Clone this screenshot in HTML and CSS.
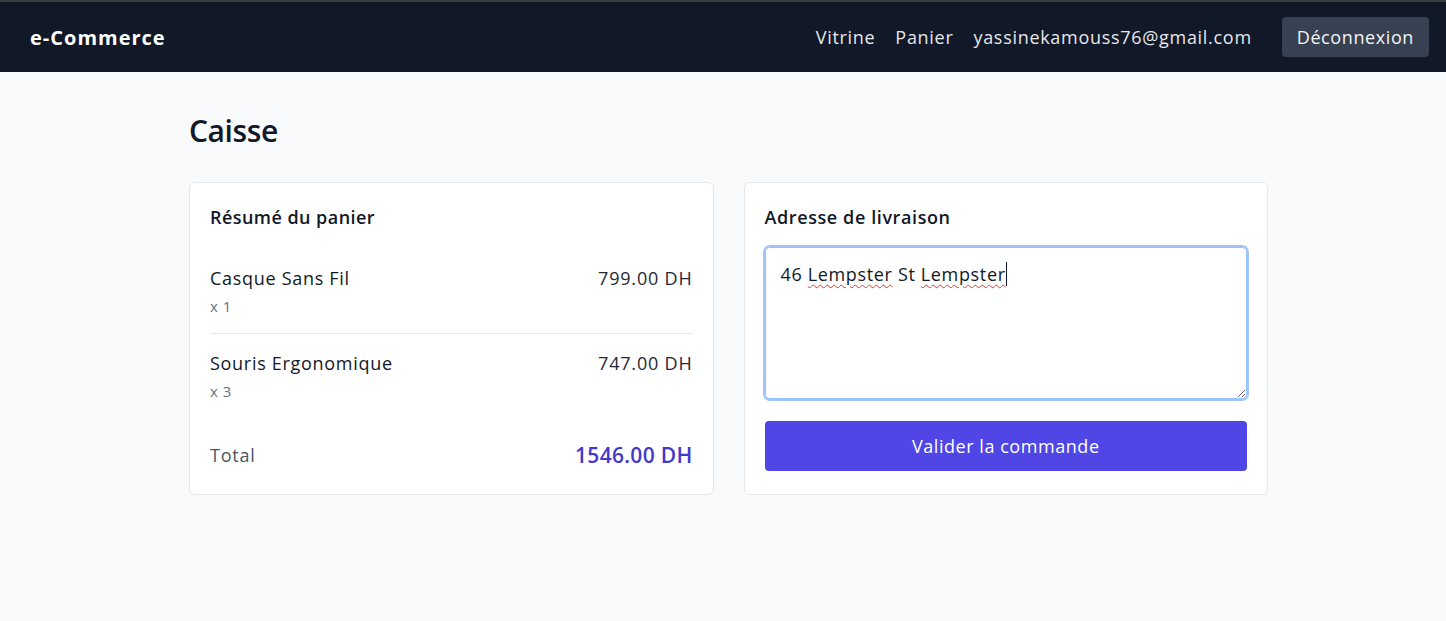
FILE: index.html
```html
<!DOCTYPE html>
<html lang="fr">
<head>
<meta charset="utf-8">
<title>Caisse - e-Commerce</title>
<link rel="stylesheet" href="styles.css">
</head>
<body>
<header class="navbar">
  <a class="brand" href="#">e-Commerce</a>
  <nav class="nav-links">
    <a href="#">Vitrine</a>
    <a href="#">Panier</a>
    <span class="user">yassinekamouss76@gmail.com</span>
    <button class="logout" type="button">Déconnexion</button>
  </nav>
</header>
<main class="container">
  <h1 class="page-title">Caisse</h1>
  <div class="grid">
    <section class="card">
      <h2 class="card-title">Résumé du panier</h2>
      <ul class="items">
        <li class="item">
          <div class="item-info">
            <div class="item-name">Casque Sans Fil</div>
            <div class="item-qty">x 1</div>
          </div>
          <div class="item-price">799.00 DH</div>
        </li>
        <li class="item">
          <div class="item-info">
            <div class="item-name">Souris Ergonomique</div>
            <div class="item-qty">x 3</div>
          </div>
          <div class="item-price">747.00 DH</div>
        </li>
      </ul>
      <div class="total">
        <span class="total-label">Total</span>
        <span class="total-value">1546.00 DH</span>
      </div>
    </section>
    <section class="card">
      <h2 class="card-title wide">Adresse de livraison</h2>
      <div class="address" role="textbox" aria-multiline="true">46 <span class="typo">Lempster</span> St <span class="typo caret">Lempster</span></div>
      <button class="submit" type="button">Valider la commande</button>
    </section>
  </div>
</main>
</body>
</html>
```
FILE: styles.css
```css
* { box-sizing: border-box; }
html, body { margin: 0; padding: 0; }
body {
  font-family: "Open Sans", "Noto Sans", sans-serif;
  background: #f9fafb;
  color: #111827;
  min-height: 621px;
  letter-spacing: 0.7px;
}
.navbar {
  height: 72px;
  border-top: 2px solid #3c3d40;
  background: #111827;
  display: flex;
  align-items: center;
  justify-content: space-between;
  padding: 0 17px 0 30px;
}
.brand {
  color: #fff;
  font-size: 20px;
  font-weight: 700;
  text-decoration: none;
  letter-spacing: 1px;
}
.nav-links {
  display: flex;
  align-items: center;
  gap: 20px;
  font-size: 18px;
  color: #e5e7eb;
}
.nav-links a { color: #e5e7eb; text-decoration: none; }
.logout {
  margin-left: 10px;
  font: inherit;
  letter-spacing: 0.6px;
  color: #f3f4f6;
  background: #374151;
  border: 0;
  border-radius: 4px;
  height: 40px;
  padding: 0 15px;
}
.container {
  max-width: 1079px;
  margin: 0 auto;
  padding: 41px 0 40px;
  position: relative;
  left: 5.5px;
}
.page-title {
  margin: 0 0 33px;
  font-size: 30px;
  line-height: 36px;
  font-weight: 600;
  letter-spacing: -0.4px;
  color: #111827;
}
.grid {
  display: grid;
  grid-template-columns: 1fr 1fr;
  gap: 30px;
  align-items: stretch;
}
.card {
  background: #fff;
  border: 1px solid #e5e7eb;
  border-radius: 6px;
  padding: 20px 20px 23px;
}
.card-title {
  margin: 0 0 16px;
  font-size: 18px;
  line-height: 28px;
  font-weight: 600;
  letter-spacing: 0.45px;
  color: #111827;
}
.card-title.wide { letter-spacing: 0.6px; }
.items { list-style: none; margin: 0; padding: 0; }
.item {
  display: flex;
  justify-content: space-between;
  align-items: flex-start;
  padding: 17px 0 17px;
  border-bottom: 1px solid #e5e7eb;
}
.item + .item { padding-top: 15px; }
.item:last-child { border-bottom: 0; }
.item-name { font-size: 18px; line-height: 28px; color: #111827; }
.item-qty { font-size: 15px; line-height: 20px; margin-top: 4px; color: #6b7280; letter-spacing: 0.5px; }
.item-price { font-size: 18px; line-height: 28px; color: #1f2937; letter-spacing: 0.8px; }
.total {
  display: flex;
  justify-content: space-between;
  align-items: center;
  margin-top: 23px;
}
.total-label { font-size: 18px; color: #4b5563; letter-spacing: 0.8px; }
.total-value { font-size: 21px; line-height: 28px; font-weight: 600; color: #4338ca; letter-spacing: 0.3px; }
.address {
  height: 152px;
  border: 1px solid #93c5fd;
  box-shadow: 0 0 0 2px #a4c3fb;
  border-radius: 5px;
  padding: 12px 15px;
  font-size: 18px;
  line-height: 28px;
  letter-spacing: 0.65px;
  color: #111827;
  overflow: auto;
  resize: vertical;
}
.typo {
  text-decoration: underline wavy #e53935;
  text-decoration-thickness: 1px;
  text-underline-offset: 3px;
}
.caret { border-right: 1px solid #111827; }
.submit {
  display: block;
  width: 100%;
  margin-top: 22px;
  height: 50px;
  border: 0;
  border-radius: 4px;
  background: #4f46e5;
  color: #fff;
  font: inherit;
  font-size: 18px;
  letter-spacing: 0.55px;
}
```
